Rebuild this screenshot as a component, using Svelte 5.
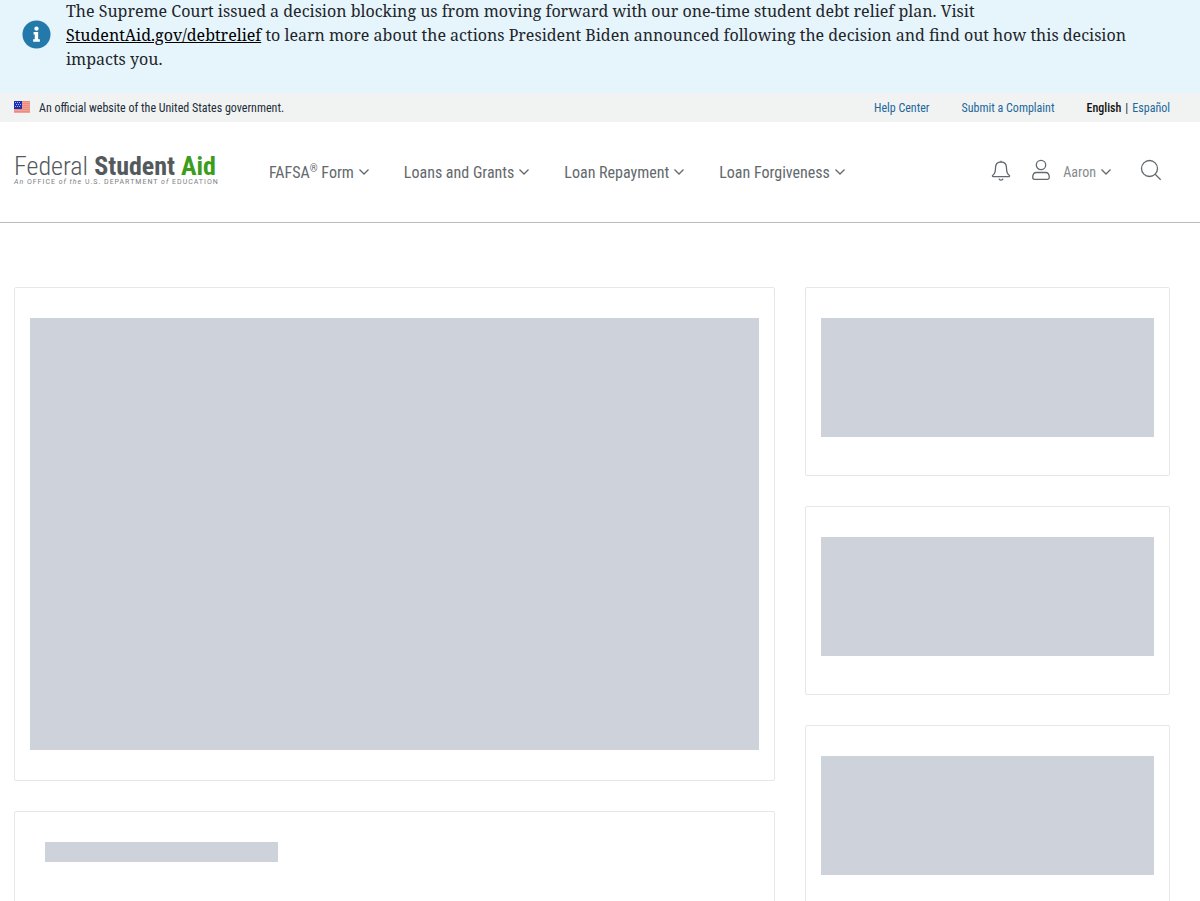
<script>
  const menus = [
    { label: 'FAFSA', mark: '®', rest: ' Form' },
    { label: 'Loans and Grants' },
    { label: 'Loan Repayment' },
    { label: 'Loan Forgiveness' }
  ];
  const stripes = [0, 2, 4, 6, 8, 10];
</script>

{#snippet chevron()}
  <svg class="chevron" viewBox="0 0 12 8" aria-hidden="true"><path d="M1.500 1.500 6 6l4.500-4.500" /></svg>
{/snippet}

<aside class="alert">
  <svg class="info" viewBox="0 0 30 30" aria-hidden="true">
    <circle cx="15" cy="15" r="14.500" fill="#237aaa" />
    <circle cx="15" cy="9" r="2.200" fill="#fff" />
    <path d="M12 12.500h4.700v7.500H18.500v2.500h-7V20H13.200v-5H12z" fill="#fff" />
  </svg>
  <p>
    The Supreme Court issued a decision blocking us from moving forward with our one-time student debt relief plan. Visit
    <a href="#debtrelief">StudentAid.gov/debtrelief</a> to learn more about the actions President Biden announced following the decision and find out how this decision impacts you.
  </p>
</aside>

<div class="utility">
  <svg class="flag" viewBox="0 0 16 12" aria-hidden="true">
    <rect width="16" height="12" fill="#f2a294" />
    {#each stripes as y}<rect {y} width="16" height="1" fill="#e98d7e" />{/each}
    <rect width="8" height="8" fill="#1f2fb5" />
    <path d="M1 1h1v1H1zM3 1h1v1H3zM5 1h1v1H5zM2 3h1v1H2zM4 3h1v1H4zM6 3h1v1H6zM1 5h1v1H1zM3 5h1v1H3zM5 5h1v1H5z" fill="#a9b4ee" />
  </svg>
  <span class="official">An official website of the United States government.</span>
  <nav class="links" aria-label="Utility">
    <a href="#help">Help Center</a>
    <a href="#complaint">Submit a Complaint</a>
    <span class="lang"><b>English</b><i>|</i><a href="#es">Español</a></span>
  </nav>
</div>

<header>
  <a class="logo" href="#home">
    <span class="name"><span class="federal">Federal</span><span class="student">Student</span><span class="aid">Aid</span></span>
    <span class="office"><em>An</em> OFFICE <em>of the</em> U.S. DEPARTMENT <em>of</em> EDUCATION</span>
  </a>
  <nav class="menu" aria-label="Main">
    {#each menus as m}
      <button>
        <span>{m.label}{#if m.mark}<sup>{m.mark}</sup>{/if}{m.rest ?? ''}</span>
        {@render chevron()}
      </button>
    {/each}
  </nav>
  <div class="tools">
    <button aria-label="Notifications">
      <svg class="bell" viewBox="0 0 20 22" aria-hidden="true">
        <path d="M10 3c-3.700 0-5.500 2.500-5.500 6 0 4.500-.8 6-2.700 7.200-.7.500-.4 1.400.3 1.400h15.800c.7 0 1-.9.300-1.400-1.900-1.200-2.700-2.700-2.700-7.200 0-3.500-1.800-6-5.500-6zM10 3V1.800M8 19.700c.2 1 .9 1.500 2 1.500s1.800-.5 2-1.500" />
      </svg>
    </button>
    <button class="account">
      <svg class="person" viewBox="0 0 20 22" aria-hidden="true">
        <circle cx="10" cy="6" r="4.700" />
        <path d="M5.500 13.500h9c2.500 0 3.800 2 3.800 5 0 1.300-.6 1.800-1.800 1.800h-13c-1.200 0-1.800-.5-1.800-1.800 0-3 1.300-5 3.800-5z" />
      </svg>
      <span>Aaron</span>
      {@render chevron()}
    </button>
    <button aria-label="Search">
      <svg class="search" viewBox="0 0 22 22" aria-hidden="true">
        <circle cx="9.500" cy="9.500" r="8" /><path d="m15.200 15.200 5.500 5.500" />
      </svg>
    </button>
  </div>
</header>

<main>
  <div class="column">
    <section class="card"><div class="block hero"></div></section>
    <section class="card second"><div class="block title"></div></section>
  </div>
  <div class="column">
    {#each [1, 2, 3] as n (n)}
      <section class="card side"><div class="block small"></div></section>
    {/each}
  </div>
</main>

<style>
  :global(body) {
    margin: 0;
    background: #fff;
    color: #212c38;
    font-family: 'Roboto Condensed', 'Liberation Sans Narrow', 'Liberation Sans', sans-serif;
  }
  :global(html) { scrollbar-width: none; }
  a { color: #21689a; text-decoration: none; }
  button {
    display: flex;
    align-items: center;
    padding: 0;
    border: 0;
    background: none;
    color: #63696c;
    font: inherit;
    cursor: pointer;
  }
  svg { display: block; flex: none; }

  .alert {
    display: flex;
    gap: 15px;
    padding: 0 60px 22px 22px;
    background: #e6f4fb;
    color: #212529;
    font-family: 'Noto Serif', 'Droid Serif', 'Liberation Serif', serif;
    font-size: 16px;
    line-height: 24px;
  }
  .alert p { margin: -1px 0 0; }
  .alert a { color: #000; text-decoration: underline; }
  .info { width: 29px; height: 29px; margin-top: 20px; }

  .utility {
    display: flex;
    align-items: center;
    height: 29px;
    padding: 0 30px 0 14px;
    background: #f1f3f3;
    font-size: 12px;
  }
  .flag { width: 16px; height: 12px; margin: 0 9px 2px 0; }
  .links { display: flex; gap: 32px; margin-left: auto; }
  .lang { display: flex; gap: 4px; }
  .lang b { color: #111; font-weight: 500; }
  .lang i { font-style: normal; }

  header {
    display: flex;
    align-items: center;
    height: 100px;
    padding: 0 38px 0 14px;
    border-bottom: 1px solid #b8bcbc;
  }
  .logo { width: 202px; margin-right: 53px; padding-bottom: 4px; color: #54595c; white-space: nowrap; }
  .name { display: flex; justify-content: space-between; font-size: 26px; line-height: 24px; }
  .federal { font-weight: 300; }
  .student, .aid { font-weight: 700; }
  .aid { color: #3c9d1c; }
  .office { display: block; color: #7b8083; font-family: Roboto, sans-serif; font-size: 7px; line-height: 8px; letter-spacing: 1px; }
  .menu { display: flex; gap: 34px; font-size: 16px; white-space: nowrap; }
  .menu button { gap: 4px; }
  sup { font-size: 10px; line-height: 0; }
  .chevron { width: 12px; height: 8px; }
  svg path, svg circle { stroke-width: 1.300; }
  .chevron, .bell, .person, .search { fill: none; stroke: #63696c; }
  .tools { display: flex; align-items: center; gap: 20px; margin-left: auto; }
  .bell, .person { width: 20px; height: 22px; }
  .search { width: 22px; height: 22px; }
  .bell, .person, .search { margin-bottom: 4px; }
  .account { gap: 4px; color: #858b8e; font-size: 14px; }
  .account .person { margin-right: 8px; }
  .account .chevron { margin-right: 8px; }

  main {
    display: grid;
    grid-template-columns: 25fr 12fr;
    align-items: start;
    gap: 30px;
    padding: 64px 30px 30px 14px;
  }
  .column { display: grid; gap: 30px; }
  .card { padding: 30px 15px; border: 1px solid #e6e7e8; border-radius: 2px; }
  .block { background: #ced3db; }
  .hero { height: 432px; }
  .side { padding-bottom: 38px; }
  .small { height: 119px; }
  .second { padding: 30px; min-height: 120px; }
  .title { width: calc(100% / 3); height: 20px; }
</style>
